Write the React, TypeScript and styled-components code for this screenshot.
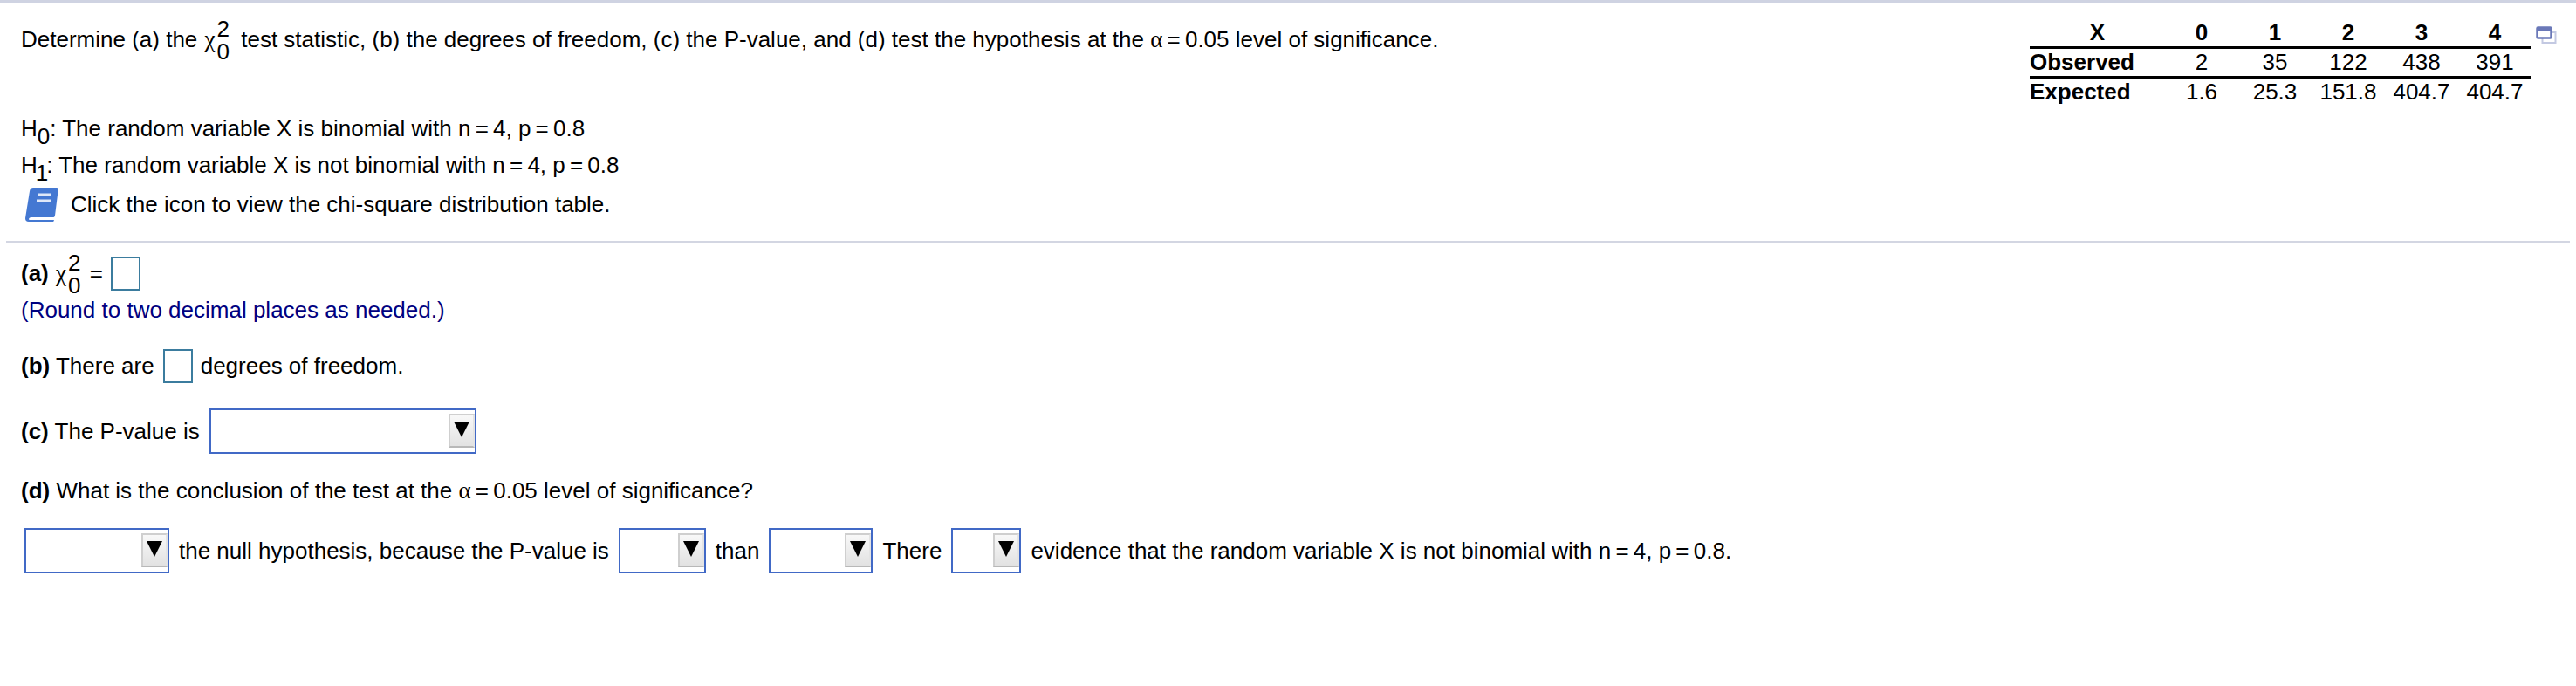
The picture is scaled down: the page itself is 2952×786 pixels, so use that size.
import React from "react";
import styled, { createGlobalStyle } from "styled-components";

const GlobalStyle = createGlobalStyle`
  html, body {
    margin: 0;
    padding: 0;
    background: #fff;
  }
  body {
    font-family: "Liberation Sans", Arial, sans-serif;
    font-size: 26px;
    color: #000;
  }
`;

const Page = styled.div`
  width: 2952px;
  height: 786px;
  box-sizing: border-box;
  border-top: 3px solid #cfd3e2;
  overflow: hidden;
`;

const Header = styled.div`
  display: flex;
  justify-content: space-between;
  align-items: flex-start;
  height: 273px;
  padding-left: 24px;
`;

const Question = styled.div`
  display: flex;
  flex-direction: column;
`;

const Line = styled.div<{ $top?: number; $height?: number }>`
  display: flex;
  align-items: center;
  white-space: pre;
  height: ${(p) => p.$height ?? 42}px;
  margin-top: ${(p) => p.$top ?? 0}px;
`;

const Hint = styled.span`
  color: #000080;
`;

const Greek = styled.span`
  font-family: "Liberation Serif", "DejaVu Serif", serif;
  font-size: 27px;
`;

const Sub = styled.span<{ $tight?: boolean }>`
  position: relative;
  top: 9px;
  line-height: 1;
  margin: 0 ${(p) => (p.$tight ? -2 : 0)}px;
`;

const Chi = styled.span`
  display: inline-flex;
  align-items: center;
  margin: 0 1px;
`;

const Scripts = styled.span`
  display: inline-flex;
  flex-direction: column;
  line-height: 26px;
  margin: 1px 2px 0;
`;

const AfterChi = styled.span`
  margin-left: 3px;
`;

const BookIcon = styled.svg`
  width: 40px;
  height: 40px;
  margin: 0 13px 0 4px;
  flex: none;
`;

const TableWrap = styled.div`
  display: flex;
  align-items: flex-start;
  margin-top: 19px;
  margin-right: 22px;
`;

const DataTable = styled.table`
  border-collapse: collapse;
  table-layout: fixed;
  width: 575px;
`;

const Cell = styled.td<{ $w?: number; $label?: boolean; $strong?: boolean }>`
  padding: 0;
  height: 31px;
  text-align: ${(p) => (p.$label ? "left" : "center")};
  font-weight: ${(p) => (p.$strong ? 700 : 400)};
  ${(p) => (p.$w ? `width: ${p.$w}px;` : "")}
`;

const TableRow = styled.tr<{ $ruled?: boolean }>`
  border-bottom: ${(p) => (p.$ruled ? "3px solid #000" : "none")};
`;

const PopoutIcon = styled.svg`
  width: 24px;
  height: 20px;
  margin-left: 5px;
  margin-top: 8px;
`;

const Answers = styled.div`
  margin: 0 7px;
  padding-left: 17px;
  border-top: 2px solid #d3d6e2;
`;

const Blank = styled.span<{ $left: number }>`
  display: inline-block;
  box-sizing: border-box;
  width: 34px;
  height: 39px;
  border: 2px solid #3b7c9e;
  margin: 0 9px 0 ${(p) => p.$left}px;
`;

const Dropdown = styled.span<{ $w: number }>`
  display: inline-flex;
  justify-content: flex-end;
  align-items: center;
  box-sizing: border-box;
  width: ${(p) => p.$w}px;
  height: 52px;
  border: 2px solid #4169c6;
  padding: 2px 0 3px;
  background: #fff;
`;

const ArrowButton = styled.span`
  display: flex;
  justify-content: center;
  box-sizing: border-box;
  width: 30px;
  height: 39px;
  padding-top: 7px;
  border: 2px solid #cfcfcf;
  border-right-color: #e4e4e4;
  border-bottom-color: #b8b8b8;
  background: linear-gradient(#f8f8f8, #e2e2e2);
`;

const Triangle = styled.span`
  width: 0;
  height: 0;
  border-left: 9px solid transparent;
  border-right: 9px solid transparent;
  border-top: 18px solid #000;
`;

const Select = ({ width }: { width: number }) => (
  <Dropdown $w={width}>
    <ArrowButton>
      <Triangle />
    </ArrowButton>
  </Dropdown>
);

const DropRow = styled(Line)<{ $indent?: number }>`
  margin-left: ${(p) => p.$indent ?? 0}px;
  gap: 11px;
`;

const ChiSquare = () => (
  <Chi>
    <Greek>χ</Greek>
    <Scripts>
      <span>2</span>
      <span>0</span>
    </Scripts>
  </Chi>
);

const Alpha = () => <Greek>α</Greek>;

const rows = [
  { label: "Observed", values: ["2", "35", "122", "438", "391"] },
  { label: "Expected", values: ["1.6", "25.3", "151.8", "404.7", "404.7"] },
];

export default function App() {
  return (
    <Page>
      <GlobalStyle />
      <Header>
        <Question>
          <Line $top={21}>
            <span>Determine (a) the </span>
            <ChiSquare />
            <AfterChi> test statistic, (b) the degrees of freedom, (c) the P-value, and (d) test the hypothesis at the </AfterChi>
            <Alpha />
            <span>{"\u2009=\u20090.05 level of significance."}</span>
          </Line>
          <Line $top={60}>
            <span>H</span>
            <Sub>0</Sub>
            <span>{": The random variable X is binomial with n\u2009=\u20094, p\u2009=\u20090.8"}</span>
          </Line>
          <Line>
            <span>H</span>
            <Sub $tight>1</Sub>
            <span>{": The random variable X is not binomial with n\u2009=\u20094, p\u2009=\u20090.8"}</span>
          </Line>
          <Line $top={3}>
            <BookIcon viewBox="0 0 40 40">
              <path
                d="M10 1h27c1.500 0 2 1 1.700 2.500L35 33c-.3 1.500-1 2-2.500 2H8c-2 0-3 1.500-3 2.200 0 .5.5.8 2 .8h26c1.500 0 1.500 1-.2 2H5c-3 0-4-1.500-4-4L6 5c.4-2.500 2-4 4-4z"
                fill="#4478d2"
              />
              <path d="M15 9h16" stroke="#dfe8f8" strokeWidth="3" />
              <path d="M14 16h16" stroke="#dfe8f8" strokeWidth="3" />
            </BookIcon>
            <span>Click the icon to view the chi-square distribution table.</span>
          </Line>
        </Question>
        <TableWrap>
          <DataTable>
            <tbody>
              <TableRow $ruled>
                <Cell $w={155} $strong>X</Cell>
                {["0", "1", "2", "3", "4"].map((n) => (
                  <Cell key={n} $w={84} $strong>{n}</Cell>
                ))}
              </TableRow>
              {rows.map((row, i) => (
                <TableRow key={row.label} $ruled={i === 0}>
                  <Cell $label $strong>{row.label}</Cell>
                  {row.values.map((v, j) => (
                    <Cell key={j}>{v}</Cell>
                  ))}
                </TableRow>
              ))}
            </tbody>
          </DataTable>
          <PopoutIcon viewBox="0 0 24 20">
            <rect x="7.500" y="7" width="15" height="12" fill="none" stroke="#c3c9e2" strokeWidth="2" />
            <rect x="1.500" y="1.500" width="16" height="12" rx="1" fill="#fff" stroke="#6a78b8" strokeWidth="2.500" />
            <rect x="1.500" y="1.500" width="16" height="3.500" fill="#6a78b8" />
          </PopoutIcon>
        </TableWrap>
      </Header>
      <Answers>
        <Line $top={16} $height={39}>
          <span><b>(a)</b> </span>
          <ChiSquare />
          <span> =</span>
          <Blank $left={9} />
        </Line>
        <Line $top={1}>
          <Hint>(Round to two decimal places as needed.)</Hint>
        </Line>
        <Line $top={24} $height={39}>
          <span><b>(b)</b> There are</span>
          <Blank $left={10} />
          <span>degrees of freedom.</span>
        </Line>
        <DropRow $top={29} $height={52}>
          <span><b>(c)</b> The P-value is</span>
          <Select width={306} />
        </DropRow>
        <Line $top={21}>
          <span><b>(d)</b> What is the conclusion of the test at the </span>
          <Alpha />
          <span>{"\u2009=\u20090.05 level of significance?"}</span>
        </Line>
        <DropRow $top={22} $height={52} $indent={4}>
          <Select width={166} />
          <span>the null hypothesis, because the P-value is</span>
          <Select width={100} />
          <span>than</span>
          <Select width={119} />
          <span>There</span>
          <Select width={80} />
          <span>{"evidence that the random variable X is not binomial with n\u2009=\u20094, p\u2009=\u20090.8."}</span>
        </DropRow>
      </Answers>
    </Page>
  );
}
